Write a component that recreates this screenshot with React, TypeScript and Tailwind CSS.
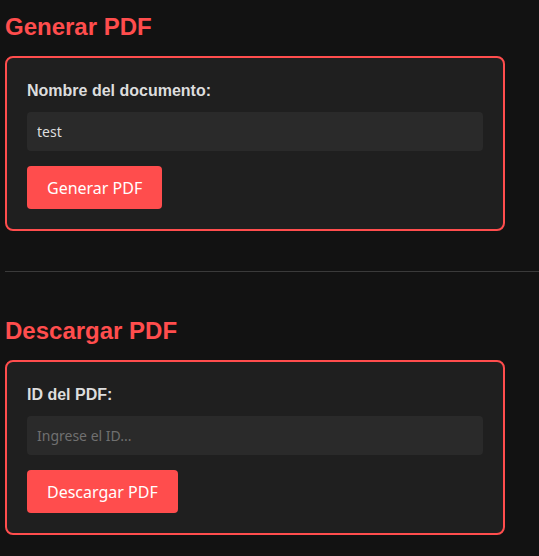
import React from "react";

const sans = { fontFamily: '"Liberation Sans", Arial, sans-serif' };

function Card({
  label,
  value,
  placeholder,
  button,
}: {
  label: string;
  value?: string;
  placeholder?: string;
  button: string;
}) {
  return (
    <div className="w-[500px] rounded-lg border-2 border-[#ff4d4d] bg-[#1f1f1f] p-5">
      <label className="mt-[4px] mb-[12px] block font-['Liberation_Sans',Arial,sans-serif] text-[16px] leading-[18px] font-bold text-[#dddddd]">
        {label}
      </label>
      <input
        className="block h-[39px] w-full rounded bg-[#2a2a2a] px-[10px] font-['Noto_Sans',sans-serif] text-[14px] text-[#dddddd] outline-none placeholder:text-[#707070]"
        defaultValue={value}
        placeholder={placeholder}
      />
      <button className="mt-[15px] h-[43px] rounded bg-[#ff4d4d] px-5 font-['Noto_Sans',sans-serif] text-[16px] text-white">
        {button}
      </button>
    </div>
  );
}

export default function App() {
  return (
    <div className="min-h-screen bg-[#121212] pt-[13px] pl-[5px]" style={sans}>
      <h2 className="mb-[15px] font-['Liberation_Sans',Arial,sans-serif] text-[24px] leading-[28px] font-bold text-[#ff4d4d]">
        Generar PDF
      </h2>
      <Card label="Nombre del documento:" value="test" button="Generar PDF" />
      <hr className="mt-[40px] border-0 border-t border-[#3a3a3a]" />
      <h2 className="mt-[45px] mb-[15px] font-['Liberation_Sans',Arial,sans-serif] text-[24px] leading-[28px] font-bold text-[#ff4d4d]">
        Descargar PDF
      </h2>
      <Card label="ID del PDF:" placeholder="Ingrese el ID..." button="Descargar PDF" />
      <div className="h-[21px]" />
    </div>
  );
}
